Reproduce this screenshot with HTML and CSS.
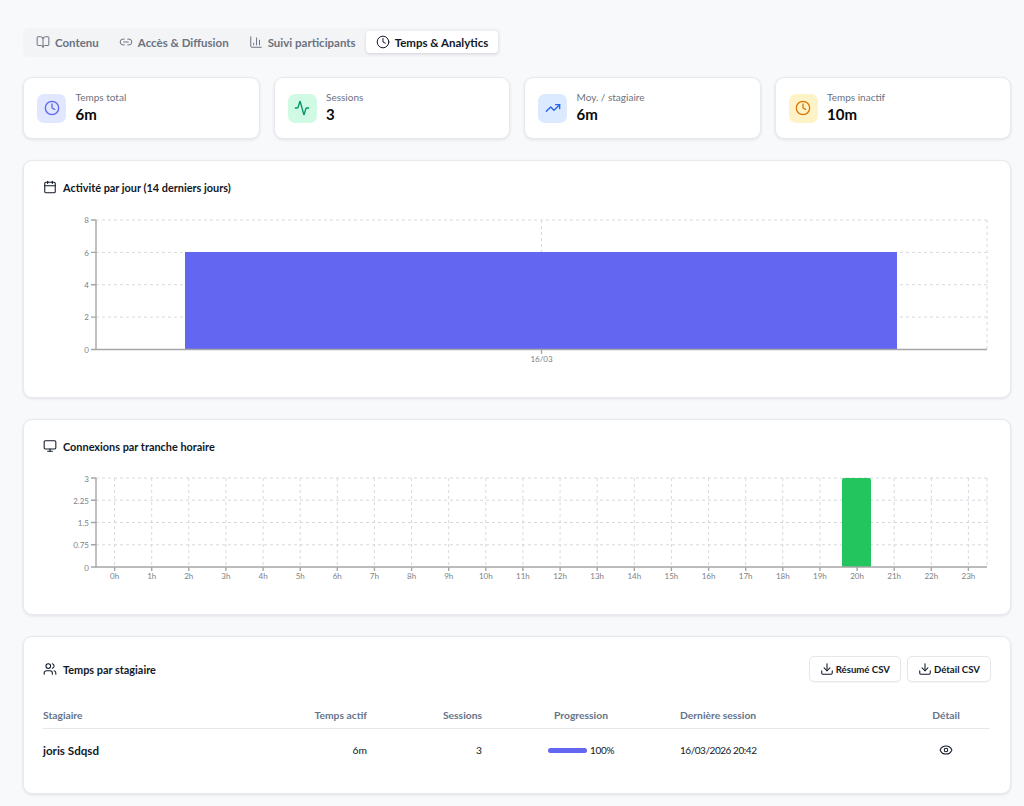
FILE: index.html
```html
<!DOCTYPE html>
<html lang="fr">
<head>
<meta charset="utf-8">
<title>Temps &amp; Analytics</title>
<link rel="stylesheet" href="styles.css">
</head>
<body>
<svg class="defs" width="0" height="0" aria-hidden="true">
  <symbol id="i-book" viewBox="0 0 24 24"><path d="M12 7v14"/><path d="M3 18a1 1 0 0 1-1-1V4a1 1 0 0 1 1-1h5a4 4 0 0 1 4 4 4 4 0 0 1 4-4h5a1 1 0 0 1 1 1v13a1 1 0 0 1-1 1h-6a3 3 0 0 0-3 3 3 3 0 0 0-3-3z"/></symbol>
  <symbol id="i-link" viewBox="0 0 24 24"><path d="M9 17H7A5 5 0 0 1 7 7h2"/><path d="M15 7h2a5 5 0 1 1 0 10h-2"/><line x1="8" x2="16" y1="12" y2="12"/></symbol>
  <symbol id="i-bars" viewBox="0 0 24 24"><path d="M3 3v16a2 2 0 0 0 2 2h16"/><path d="M18 17V9"/><path d="M13 17V5"/><path d="M8 17v-3"/></symbol>
  <symbol id="i-clock" viewBox="0 0 24 24"><circle cx="12" cy="12" r="10"/><polyline points="12 6 12 12 16 14"/></symbol>
  <symbol id="i-activity" viewBox="0 0 24 24"><path d="M22 12h-2.48a2 2 0 0 0-1.93 1.46l-2.35 8.36a.25.25 0 0 1-.48 0L9.24 2.18a.25.25 0 0 0-.48 0l-2.35 8.36A2 2 0 0 1 4.49 12H2"/></symbol>
  <symbol id="i-trend" viewBox="0 0 24 24"><polyline points="22 7 13.5 15.5 8.5 10.5 2 17"/><polyline points="16 7 22 7 22 13"/></symbol>
  <symbol id="i-calendar" viewBox="0 0 24 24"><path d="M8 2v4"/><path d="M16 2v4"/><rect width="18" height="18" x="3" y="4" rx="2"/><path d="M3 10h18"/></symbol>
  <symbol id="i-monitor" viewBox="0 0 24 24"><rect width="20" height="14" x="2" y="3" rx="2"/><line x1="8" x2="16" y1="21" y2="21"/><line x1="12" x2="12" y1="17" y2="21"/></symbol>
  <symbol id="i-users" viewBox="0 0 24 24"><path d="M16 21v-2a4 4 0 0 0-4-4H6a4 4 0 0 0-4 4v2"/><circle cx="9" cy="7" r="4"/><path d="M22 21v-2a4 4 0 0 0-3-3.87"/><path d="M16 3.13a4 4 0 0 1 0 7.75"/></symbol>
  <symbol id="i-download" viewBox="0 0 24 24"><path d="M21 15v4a2 2 0 0 1-2 2H5a2 2 0 0 1-2-2v-4"/><polyline points="7 10 12 15 17 10"/><line x1="12" x2="12" y1="15" y2="3"/></symbol>
  <symbol id="i-eye" viewBox="0 0 24 24"><path d="M2.062 12.348a1 1 0 0 1 0-.696 10.75 10.75 0 0 1 19.876 0 1 1 0 0 1 0 .696 10.75 10.75 0 0 1-19.876 0"/><circle cx="12" cy="12" r="3"/></symbol>
</svg>

<main class="page">
  <nav class="tabs">
    <a class="tab"><svg class="ico ico-tab"><use href="#i-book"/></svg>Contenu</a>
    <a class="tab"><svg class="ico ico-tab"><use href="#i-link"/></svg>Accès &amp; Diffusion</a>
    <a class="tab"><svg class="ico ico-tab"><use href="#i-bars"/></svg>Suivi participants</a>
    <a class="tab tab-active"><svg class="ico ico-tab"><use href="#i-clock"/></svg>Temps &amp; Analytics</a>
  </nav>

  <section class="stats">
    <div class="card stat">
      <div class="stat-icon bg-indigo"><svg class="ico ico-stat"><use href="#i-clock"/></svg></div>
      <div class="stat-text"><div class="stat-label">Temps total</div><div class="stat-value">6m</div></div>
    </div>
    <div class="card stat">
      <div class="stat-icon bg-green"><svg class="ico ico-stat"><use href="#i-activity"/></svg></div>
      <div class="stat-text"><div class="stat-label">Sessions</div><div class="stat-value">3</div></div>
    </div>
    <div class="card stat">
      <div class="stat-icon bg-blue"><svg class="ico ico-stat"><use href="#i-trend"/></svg></div>
      <div class="stat-text"><div class="stat-label">Moy. / stagiaire</div><div class="stat-value">6m</div></div>
    </div>
    <div class="card stat">
      <div class="stat-icon bg-amber"><svg class="ico ico-stat"><use href="#i-clock"/></svg></div>
      <div class="stat-text"><div class="stat-label">Temps inactif</div><div class="stat-value">10m</div></div>
    </div>
  </section>

  <section class="card panel panel-day">
    <h2 class="panel-title"><svg class="ico ico-title"><use href="#i-calendar"/></svg>Activité par jour (14 derniers jours)</h2>
    <svg class="chart chart-day" viewBox="43 214 948 160">
      <g class="grid">
        <path d="M96 220H987M96 252.4H987M96 284.7H987M96 317.1H987"/>
        <path d="M541.5 220V349.5M987 220V349.5"/>
      </g>
      <rect class="bar-indigo" x="185" y="252" width="712" height="97.5"/>
      <g class="axis">
        <path d="M96 220V349.5H987"/>
        <path d="M91 220H96M91 252.4H96M91 284.7H96M91 317.1H96M91 349.5H96M541.5 349.5V354"/>
      </g>
      <g class="tick tick-y">
        <text x="89" y="223">8</text><text x="89" y="255.5">6</text><text x="89" y="288">4</text><text x="89" y="320">2</text><text x="89" y="352.5">0</text>
      </g>
      <g class="tick tick-x"><text x="541.5" y="362">16/03</text></g>
    </svg>
  </section>

  <section class="card panel panel-hour">
    <h2 class="panel-title"><svg class="ico ico-title"><use href="#i-monitor"/></svg>Connexions par tranche horaire</h2>
    <svg class="chart chart-hour" viewBox="43 473 948 120">
      <g class="grid">
        <path d="M96 478H987M96 500.2H987M96 522.5H987M96 544.8H987"/>
        <path d="M114.6 478V567M151.7 478V567M188.8 478V567M225.9 478V567M263.1 478V567M300.2 478V567M337.3 478V567M374.4 478V567M411.6 478V567M448.7 478V567M485.8 478V567M522.9 478V567M560.1 478V567M597.2 478V567M634.3 478V567M671.4 478V567M708.6 478V567M745.7 478V567M782.8 478V567M819.9 478V567M857.1 478V567M894.2 478V567M931.3 478V567M968.4 478V567M987 478V567"/>
      </g>
      <path class="bar-green" d="M842 567V480a2 2 0 0 1 2-2h25a2 2 0 0 1 2 2V567z"/>
      <g class="axis">
        <path d="M96 478V567H987"/>
        <path d="M91 478H96M91 500.2H96M91 522.5H96M91 544.8H96M91 567H96"/>
        <path d="M114.6 567v4M151.7 567v4M188.8 567v4M225.9 567v4M263.1 567v4M300.2 567v4M337.3 567v4M374.4 567v4M411.6 567v4M448.7 567v4M485.8 567v4M522.9 567v4M560.1 567v4M597.2 567v4M634.3 567v4M671.4 567v4M708.6 567v4M745.7 567v4M782.8 567v4M819.9 567v4M857.1 567v4M894.2 567v4M931.3 567v4M968.4 567v4"/>
      </g>
      <g class="tick tick-y">
        <text x="89" y="481.5">3</text><text x="89" y="503.5">2.25</text><text x="89" y="526">1.5</text><text x="89" y="548">0.75</text><text x="89" y="570.5">0</text>
      </g>
      <g class="tick tick-x">
        <text x="114.6" y="579">0h</text><text x="151.7" y="579">1h</text><text x="188.8" y="579">2h</text><text x="225.9" y="579">3h</text><text x="263.1" y="579">4h</text><text x="300.2" y="579">5h</text><text x="337.3" y="579">6h</text><text x="374.4" y="579">7h</text><text x="411.6" y="579">8h</text><text x="448.7" y="579">9h</text><text x="485.8" y="579">10h</text><text x="522.9" y="579">11h</text><text x="560.1" y="579">12h</text><text x="597.2" y="579">13h</text><text x="634.3" y="579">14h</text><text x="671.4" y="579">15h</text><text x="708.6" y="579">16h</text><text x="745.7" y="579">17h</text><text x="782.8" y="579">18h</text><text x="819.9" y="579">19h</text><text x="857.1" y="579">20h</text><text x="894.2" y="579">21h</text><text x="931.3" y="579">22h</text><text x="968.4" y="579">23h</text>
      </g>
    </svg>
  </section>

  <section class="card panel panel-table">
    <header class="table-head">
      <h2 class="panel-title title-flat"><svg class="ico ico-title"><use href="#i-users"/></svg>Temps par stagiaire</h2>
      <div class="actions">
        <button class="btn"><svg class="ico ico-btn"><use href="#i-download"/></svg>Résumé CSV</button>
        <button class="btn"><svg class="ico ico-btn"><use href="#i-download"/></svg>Détail CSV</button>
      </div>
    </header>
    <table class="table">
      <thead>
        <tr>
          <th class="col-name">Stagiaire</th>
          <th class="col-time num">Temps actif</th>
          <th class="col-sess num">Sessions</th>
          <th class="col-prog mid">Progression</th>
          <th class="col-last">Dernière session</th>
          <th class="col-det mid">Détail</th>
        </tr>
      </thead>
      <tbody>
        <tr>
          <td class="name">joris Sdqsd</td>
          <td class="num">6m</td>
          <td class="num">3</td>
          <td><div class="progress"><span class="track"><span class="fill"></span></span><span class="pct">100%</span></div></td>
          <td class="date">16/03/2026 20:42</td>
          <td class="mid"><svg class="ico ico-eye"><use href="#i-eye"/></svg></td>
        </tr>
      </tbody>
    </table>
  </section>
</main>
</body>
</html>
```
FILE: styles.css
```css
* { box-sizing: border-box; }
html, body { margin: 0; padding: 0; }
body {
  background: #f8f9fb;
  color: #0f172a;
  font-family: Lato, "Noto Sans", Arial, sans-serif;
  font-size: 11px;
}
.defs { position: absolute; }
.ico {
  fill: none;
  stroke: currentColor;
  stroke-width: 2;
  stroke-linecap: round;
  stroke-linejoin: round;
  flex: none;
  display: block;
}
.page { padding: 28px 13px 0 23px; height: 806px; overflow: hidden; }

.tabs {
  display: inline-flex;
  padding: 3px 3px 4px;
  background: #f3f4f6;
  border-radius: 6px;
  margin-bottom: 20px;
  vertical-align: top;
}
.tab {
  display: flex;
  align-items: center;
  gap: 5px;
  height: 22px;
  padding: 0 10px;
  color: #6b7280;
  font-weight: 700;
  font-size: 11.5px;
  border-radius: 4px;
}
.tab-active {
  background: #fff;
  color: #111827;
  box-shadow: 0 1px 3px rgba(15, 23, 42, .14);
}
.ico-tab { width: 14px; height: 14px; stroke-width: 1.7; }

.card {
  background: #fff;
  border: 1px solid #e7e9ee;
  border-radius: 9px;
  box-shadow: 0 1px 3px rgba(15, 23, 42, .1);
}
.stats {
  display: grid;
  grid-template-columns: repeat(4, 1fr);
  gap: 14px;
  margin-bottom: 21px;
}
.stat {
  height: 62px;
  display: flex;
  align-items: center;
  gap: 9.5px;
  padding: 0 13px;
}
.stat-icon {
  width: 29px;
  height: 29px;
  border-radius: 7px;
  display: flex;
  align-items: center;
  justify-content: center;
}
.ico-stat { width: 16px; height: 16px; }
.bg-indigo { background: #e0e7ff; color: #6366f1; }
.bg-green { background: #d1fae5; color: #059669; }
.bg-blue { background: #dbeafe; color: #2563eb; }
.bg-amber { background: #fef3c7; color: #d97706; }
.stat-text { padding-bottom: 1px; }
.stat-label { font-size: 10px; line-height: 13px; color: #6b7280; }
.stat-value { font-size: 15px; line-height: 20px; font-weight: 700; color: #0a0a0a; }

.panel { margin-bottom: 21px; padding: 19px 19px 0; }
.panel-day { height: 238px; }
.panel-hour { height: 196px; }
.panel-table { height: 158px; margin-bottom: 0; }
.panel-title {
  display: flex;
  align-items: center;
  gap: 6px;
  margin: 0;
  height: 14px;
  font-size: 10.9px;
  font-weight: 700;
  color: #111827;
}
.ico-title { width: 14px; height: 14px; stroke-width: 1.8; }
.chart { display: block; width: 948px; }
.chart-day { height: 160px; margin-top: 20px; }
.chart-hour { height: 120px; margin-top: 20px; }
.grid path { fill: none; stroke: #d6d9de; stroke-width: 1; stroke-dasharray: 3 3; }
.axis path { fill: none; stroke: #a6a6a6; stroke-width: 1.4; }
.bar-indigo { fill: #6366f1; }
.bar-green { fill: #22c55e; }
.tick text { font-size: 8px; fill: #7b7f87; }
.tick-y text { text-anchor: end; }
.tick-x text { text-anchor: middle; }

.table-head {
  display: flex;
  align-items: center;
  justify-content: space-between;
  height: 26px;
  margin-bottom: 21px;
}
.actions { display: flex; gap: 6px; }
.btn {
  display: flex;
  align-items: center;
  gap: 2px;
  height: 26px;
  padding: 0 10px;
  background: #fff;
  border: 1px solid #e5e7eb;
  border-radius: 5px;
  font-family: inherit;
  font-size: 9.6px;
  font-weight: 700;
  color: #111827;
  box-shadow: 0 1px 1px rgba(15, 23, 42, .04);
}
.ico-btn { width: 14px; height: 14px; stroke-width: 1.8; }

.table {
  width: 947px;
  table-layout: fixed;
  border-collapse: collapse;
  font-size: 10.3px;
}
.col-name { width: 200px; }
.col-time { width: 136px; }
.col-sess { width: 115px; }
.col-prog { width: 174px; }
.col-last { width: 234px; }
.col-det { width: 88px; }
th, td { padding: 0 12px; text-align: left; }
th:first-child, td:first-child { padding-left: 0; }
th {
  height: 25px;
  font-weight: 700;
  color: #64748b;
  border-bottom: 1px solid #e5e7eb;
}
td { height: 44px; color: #111827; }
.num { text-align: right; }
.mid { text-align: center; }
.name { font-weight: 700; font-size: 11.6px; }
.date { font-size: 10px; letter-spacing: -.45px; }
.progress { display: flex; align-items: center; justify-content: center; gap: 3px; }
.pct { font-size: 10px; letter-spacing: -.3px; }
.track { width: 39px; height: 5px; background: #e5e7eb; border-radius: 3px; overflow: hidden; display: block; }
.fill { display: block; width: 100%; height: 100%; background: #6366f1; }
.ico-eye { width: 14px; height: 14px; margin: 0 auto; stroke-width: 1.8; }
```
